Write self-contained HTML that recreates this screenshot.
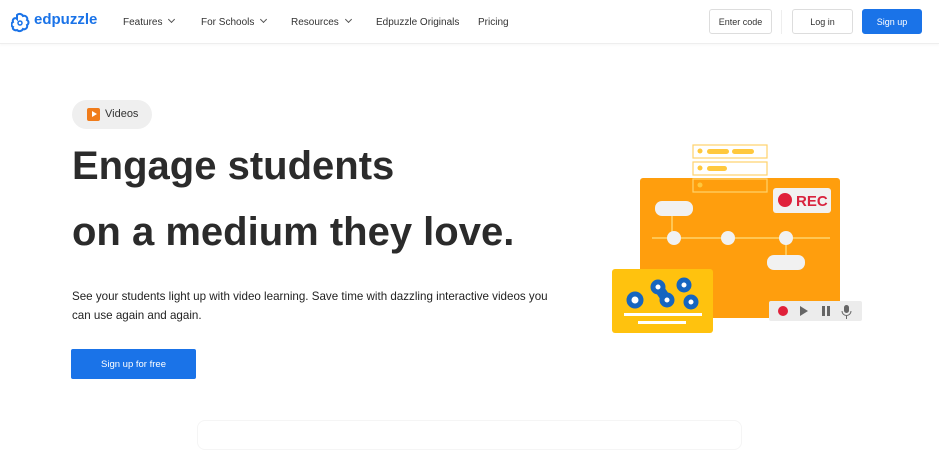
<!DOCTYPE html>
<html><head><style>
*{margin:0;padding:0;box-sizing:border-box}
body{width:939px;height:437px;overflow:hidden;background:#fff;font-family:"Liberation Sans",sans-serif;color:#222;position:relative}
.nav{position:absolute;top:0;left:0;width:939px;height:44px;border-bottom:1px solid #eee;box-shadow:0 1px 3px rgba(0,0,0,.04)}
.nav span{position:absolute;top:17px;font-size:10px;color:#333}
.btn{position:absolute;top:9px;height:25px;border:1px solid #ddd;border-radius:3px;font-size:9px;display:flex;align-items:center;justify-content:center;color:#333}
.chev{display:inline-block;width:5px;height:5px;border-right:1px solid #555;border-bottom:1px solid #555;transform:rotate(45deg);margin-left:7px;position:relative;top:-3px}
h1{position:absolute;left:72px;top:133px;font-size:40px;line-height:66px;font-weight:bold;color:#2b2b2b;letter-spacing:0}
p{position:absolute;left:72px;top:287px;font-size:11.6px;line-height:19px;color:#222;width:486px}
</style></head><body>
<div class="nav">
<svg style="position:absolute;left:11px;top:12px" width="20" height="22" viewBox="0 0 20 22"><path d="M6 3c2-2 5-1 6 1 3-1 5 2 4 4 2 1 2 4 0 5 1 3-2 5-4 4-1 2-4 3-6 1-2 1-5-1-4-3-2-1-2-4 0-5-1-3 2-5 4-3z" fill="none" stroke="#1a73e8" stroke-width="2"/><circle cx="9" cy="11" r="2" fill="none" stroke="#1a73e8" stroke-width="1.5"/></svg>
<span style="left:34px;top:11px;font-size:15px;font-weight:bold;color:#1a73e8">edpuzzle</span>
<span style="left:123px">Features<i class="chev"></i></span>
<span style="left:201px">For Schools<i class="chev"></i></span>
<span style="left:291px">Resources<i class="chev"></i></span>
<span style="left:376px">Edpuzzle Originals</span>
<span style="left:478px">Pricing</span>
<div class="btn" style="left:709px;width:63px">Enter code</div>
<div style="position:absolute;left:781px;top:10px;width:1px;height:24px;background:#eee"></div>
<div class="btn" style="left:792px;width:61px">Log in</div>
<div class="btn" style="left:862px;width:60px;background:#1a73e8;border-color:#1a73e8;color:#fff">Sign up</div>
</div>
<div style="position:absolute;left:72px;top:100px;width:80px;height:29px;border-radius:15px;background:#efefef;font-size:11px;color:#333">
<div style="position:absolute;left:15px;top:8px;width:13px;height:13px;border-radius:2px;background:#f07c1b"></div>
<div style="position:absolute;left:20px;top:11px;border-left:5px solid #fff;border-top:3.5px solid transparent;border-bottom:3.5px solid transparent"></div>
<span style="position:absolute;left:33px;top:8px">Videos</span></div>
<h1>Engage students<br>on a medium they love.</h1>
<p>See your students light up with video learning. Save time with dazzling interactive videos you can use again and again.</p>
<div style="position:absolute;left:71px;top:349px;width:125px;height:30px;background:#1a73e8;border-radius:2px;color:#fff;font-size:9.5px;display:flex;align-items:center;justify-content:center">Sign up for free</div>
<div style="position:absolute;left:197px;top:420px;width:545px;height:30px;border:1px solid #f5f5f5;border-radius:8px"></div>
<svg style="position:absolute;left:600px;top:130px" width="270" height="210" viewBox="0 0 270 210">
<rect x="40" y="48" width="200" height="140" rx="3" fill="#ff9e0d"/>
<g fill="none" stroke="#ffd36b" stroke-width="1.2">
<rect x="93" y="15" width="74" height="13" fill="#fff"/><rect x="93" y="32" width="74" height="13" fill="#fff"/><rect x="93" y="49" width="74" height="13"/>
</g>
<g fill="#ffc83d"><rect x="107" y="19" width="22" height="5" rx="2.5"/><rect x="132" y="19" width="22" height="5" rx="2.5"/><rect x="107" y="36" width="20" height="5" rx="2.5"/><circle cx="100" cy="21" r="2.5"/><circle cx="100" cy="38" r="2.5"/><circle cx="100" cy="55" r="2.5"/></g>
<rect x="173" y="58" width="58" height="25" rx="3" fill="#f1f1f1"/><circle cx="185" cy="70" r="7" fill="#e0203a"/><text x="196" y="76" font-family="Liberation Sans" font-weight="bold" font-size="15" fill="#d9233e">REC</text>
<line x1="52" y1="108" x2="230" y2="108" stroke="#ffd36b" stroke-width="1.5"/>
<line x1="72" y1="78" x2="72" y2="105" stroke="#ffd36b" stroke-width="1.5"/><line x1="186" y1="108" x2="186" y2="130" stroke="#ffd36b" stroke-width="1.5"/>
<g fill="#f1f1f1"><rect x="55" y="71" width="38" height="15" rx="7"/><circle cx="74" cy="108" r="7"/><circle cx="128" cy="108" r="7"/><circle cx="186" cy="108" r="7"/><rect x="167" y="125" width="38" height="15" rx="7"/></g>
<rect x="12" y="139" width="101" height="64" rx="3" fill="#ffc20e"/>
<line x1="58" y1="157" x2="67" y2="170" stroke="#1565c0" stroke-width="10"/>
<g fill="#fff" stroke="#1565c0" stroke-width="5"><circle cx="35" cy="170" r="6"/><circle cx="58" cy="157" r="5"/><circle cx="67" cy="170" r="5"/><circle cx="84" cy="155" r="5"/><circle cx="91" cy="172" r="5"/></g>
<rect x="24" y="183" width="78" height="3" fill="#fff"/><rect x="38" y="191" width="48" height="3" fill="#fff"/>
<rect x="169" y="171" width="93" height="20" rx="2" fill="#ececec"/>
<circle cx="183" cy="181" r="5" fill="#e0203a"/><path d="M200 176l8 5-8 5z" fill="#666"/><rect x="222" y="176" width="3" height="10" fill="#666"/><rect x="227" y="176" width="3" height="10" fill="#666"/><rect x="244" y="175" width="5" height="8" rx="2.5" fill="#666"/><path d="M242 181a4.5 4.5 0 0 0 9 0M246.5 186v3" stroke="#666" fill="none"/>
</svg>
</body></html>
